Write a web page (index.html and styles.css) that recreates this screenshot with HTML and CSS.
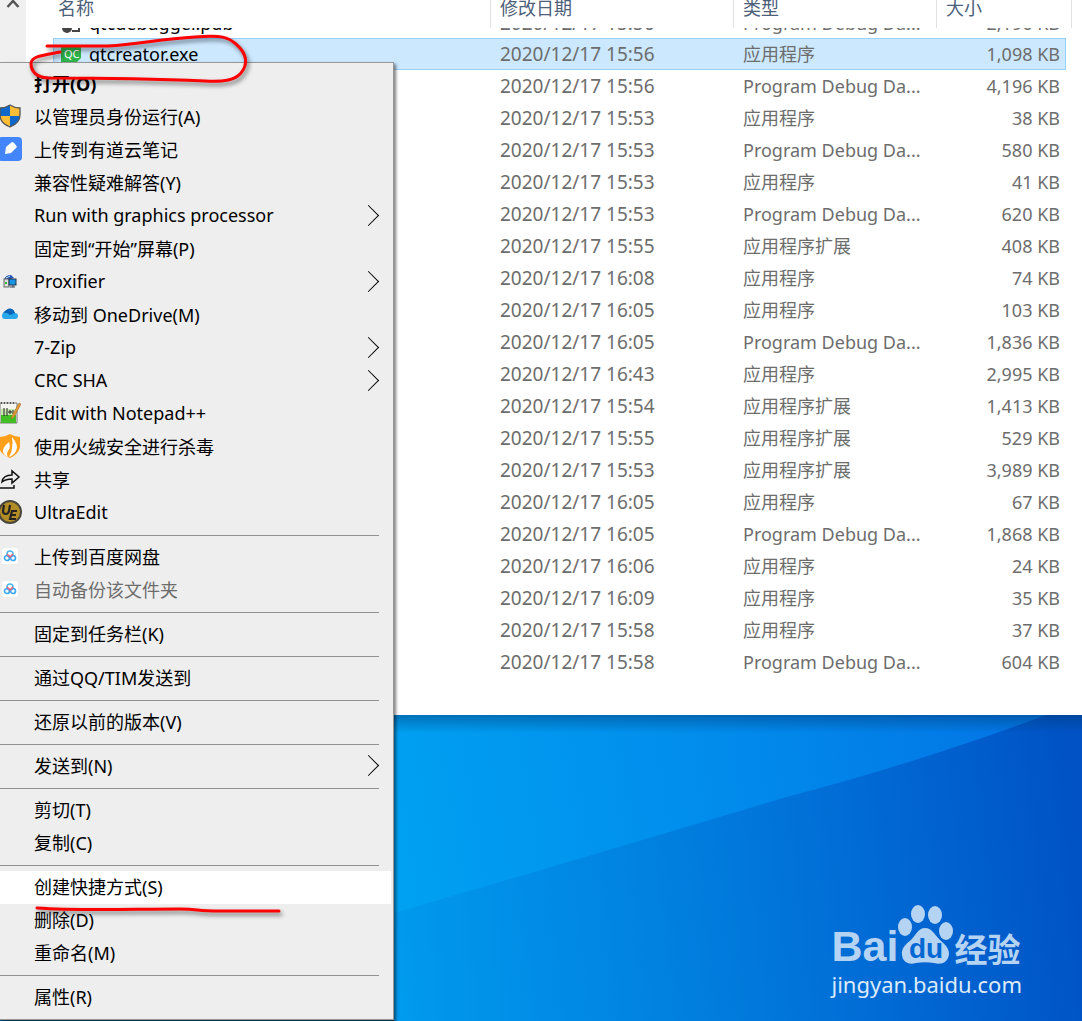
FILE: index.html
```
<!DOCTYPE html>
<html lang="zh-CN">
<head>
    <meta charset="UTF-8">
    <meta name="viewport" content="width=device-width, initial-scale=1.0">
    <title>qtcreator.exe</title>
    <link rel="stylesheet" href="styles.css">
</head>
<body>
    <main class="explorer">
        <div class="nav-scroll">
            <svg width="14" height="9" viewBox="0 0 14 9"><path d="M1.500 7L7 1l5.500 6" fill="none" stroke="#555" stroke-width="2.500"/></svg>
        </div>
        <table class="files">
            <colgroup>
                <col>
                <col class="col-date">
                <col class="col-type">
                <col class="col-size">
                <col class="col-end">
            </colgroup>
            <thead>
                <tr><th>名称</th><th>修改日期</th><th>类型</th><th>大小</th><th></th></tr>
            </thead>
            <tbody>
                <tr class="cut">
                    <td><div class="clip name"><svg width="20" height="20" viewBox="0 0 20 20"><circle cx="6" cy="10" r="5" fill="#444"/><path d="M11 13h7V6" fill="none" stroke="#444" stroke-width="2"/></svg>qtcdebugger.pdb</div></td>
                    <td class="date"><div class="clip">2020/12/17 15:56</div></td>
                    <td><div class="clip">Program Debug Da...</div></td>
                    <td class="size"><div class="clip">2,196 KB</div></td>
                    <td></td>
                </tr>
                <tr class="selected">
                    <td><div class="name"><svg width="20" height="16" viewBox="0 0 20 16"><path d="M0 0h20v12l-4 4H0z" fill="#2eb34a"/><text x="3" y="12" class="qc">QC</text></svg>qtcreator.exe</div></td>
                    <td class="date">2020/12/17 15:56</td><td>应用程序</td><td class="size">1,098 KB</td><td></td>
                </tr>
                <tr><td></td><td class="date">2020/12/17 15:56</td><td>Program Debug Da...</td><td class="size">4,196 KB</td><td></td></tr>
                <tr><td></td><td class="date">2020/12/17 15:53</td><td>应用程序</td><td class="size">38 KB</td><td></td></tr>
                <tr><td></td><td class="date">2020/12/17 15:53</td><td>Program Debug Da...</td><td class="size">580 KB</td><td></td></tr>
                <tr><td></td><td class="date">2020/12/17 15:53</td><td>应用程序</td><td class="size">41 KB</td><td></td></tr>
                <tr><td></td><td class="date">2020/12/17 15:53</td><td>Program Debug Da...</td><td class="size">620 KB</td><td></td></tr>
                <tr><td></td><td class="date">2020/12/17 15:55</td><td>应用程序扩展</td><td class="size">408 KB</td><td></td></tr>
                <tr><td></td><td class="date">2020/12/17 16:08</td><td>应用程序</td><td class="size">74 KB</td><td></td></tr>
                <tr><td></td><td class="date">2020/12/17 16:05</td><td>应用程序</td><td class="size">103 KB</td><td></td></tr>
                <tr><td></td><td class="date">2020/12/17 16:05</td><td>Program Debug Da...</td><td class="size">1,836 KB</td><td></td></tr>
                <tr><td></td><td class="date">2020/12/17 16:43</td><td>应用程序</td><td class="size">2,995 KB</td><td></td></tr>
                <tr><td></td><td class="date">2020/12/17 15:54</td><td>应用程序扩展</td><td class="size">1,413 KB</td><td></td></tr>
                <tr><td></td><td class="date">2020/12/17 15:55</td><td>应用程序扩展</td><td class="size">529 KB</td><td></td></tr>
                <tr><td></td><td class="date">2020/12/17 15:53</td><td>应用程序扩展</td><td class="size">3,989 KB</td><td></td></tr>
                <tr><td></td><td class="date">2020/12/17 16:05</td><td>应用程序</td><td class="size">67 KB</td><td></td></tr>
                <tr><td></td><td class="date">2020/12/17 16:05</td><td>Program Debug Da...</td><td class="size">1,868 KB</td><td></td></tr>
                <tr><td></td><td class="date">2020/12/17 16:06</td><td>应用程序</td><td class="size">24 KB</td><td></td></tr>
                <tr><td></td><td class="date">2020/12/17 16:09</td><td>应用程序</td><td class="size">35 KB</td><td></td></tr>
                <tr><td></td><td class="date">2020/12/17 15:58</td><td>应用程序</td><td class="size">37 KB</td><td></td></tr>
                <tr><td></td><td class="date">2020/12/17 15:58</td><td>Program Debug Da...</td><td class="size">604 KB</td><td></td></tr>
            </tbody>
        </table>
    </main>

    <section class="desktop">
        <svg class="wallpaper" viewBox="394 715 688 306" preserveAspectRatio="none">
            <defs>
                <linearGradient id="beam" gradientUnits="userSpaceOnUse" x1="394" y1="800" x2="1000" y2="700">
                    <stop offset="0" stop-color="#00a0f2"/>
                    <stop offset="0.500" stop-color="#018dec"/>
                    <stop offset="1" stop-color="#0277e6"/>
                </linearGradient>
                <linearGradient id="dark" gradientUnits="userSpaceOnUse" x1="394" y1="940" x2="1082" y2="860">
                    <stop offset="0" stop-color="#009aee"/>
                    <stop offset="0.500" stop-color="#0179dc"/>
                    <stop offset="0.750" stop-color="#0166d2"/>
                    <stop offset="1" stop-color="#0052c5"/>
                </linearGradient>
                <linearGradient id="edge" x1="0" y1="0" x2="0" y2="1">
                    <stop offset="0" stop-color="#003a70" stop-opacity="0.450"/>
                    <stop offset="1" stop-color="#003a70" stop-opacity="0"/>
                </linearGradient>
            </defs>
            <rect x="394" y="715" width="688" height="306" fill="url(#dark)"/>
            <path d="M394 715H1046L1038 718Q920 762 783 798Q600 853 394 913z" fill="url(#beam)"/>
            <rect x="394" y="715" width="688" height="18" fill="url(#edge)"/>
        </svg>
        <div class="watermark">
            <div class="brand">
                <span class="bai">Bai</span>
                <svg width="56" height="62" viewBox="0 0 56 62">
                    <g fill="#b5d3f2">
                        <ellipse cx="7" cy="23" rx="7" ry="9"/>
                        <ellipse cx="20" cy="10" rx="7" ry="9"/>
                        <ellipse cx="37" cy="11" rx="7" ry="9"/>
                        <ellipse cx="48" cy="27" rx="7" ry="9"/>
                        <path d="M27 24C20 24 18 31 13 36C8 40 3 44 4 51C5 59 12 61 18 59C24 58 30 58 36 59C43 61 50 59 51 50C51 43 46 40 41 35C36 30 34 24 27 24z"/>
                    </g>
                    <text x="11" y="54" class="du">du</text>
                </svg>
                <span class="jingyan">经验</span>
            </div>
            <div class="url">jingyan.baidu.com</div>
        </div>
    </section>

    <nav class="menu">
        <button class="item default" type="button"><span class="icon"></span>打开(O)</button>
        <button class="item" type="button"><span class="icon"><svg width="22" height="24" viewBox="0 0 22 24">
            <path d="M11 1C8 3 4 4 1 4v8h10z" fill="#0f68c9"/><path d="M11 1c3 2 7 3 10 3v8H11z" fill="#ffbc35"/>
            <path d="M1 12c1 6 5 9 10 11V12z" fill="#ffbc35"/><path d="M21 12c-1 6-5 9-10 11V12z" fill="#0f68c9"/>
            <path d="M11 1C8 3 4 4 1 4v7c0 6 5 10 10 12c5-2 10-6 10-12V4c-3 0-7-1-10-3z" fill="none" stroke="#555" stroke-width="1.300"/></svg></span>以管理员身份运行(A)</button>
        <button class="item" type="button"><span class="icon"><svg width="24" height="24" viewBox="0 0 24 24">
            <rect width="24" height="24" rx="4" fill="#4385fb"/><path d="M7 17l1-7 6-5q2 0 5 5l-6 6z" fill="#fff"/></svg></span>上传到有道云笔记</button>
        <button class="item" type="button"><span class="icon"></span>兼容性疑难解答(Y)</button>
        <button class="item sub" type="button"><span class="icon"></span>Run with graphics processor</button>
        <button class="item" type="button"><span class="icon"></span>固定到“开始”屏幕(P)</button>
        <button class="item sub" type="button"><span class="icon"><svg width="14" height="14" viewBox="0 0 14 14">
            <path d="M1 6q1-5 7-5l3 3-7 2z" fill="#2556b8"/><path d="M3 4l4-2" stroke="#cde" stroke-width="1"/><rect x="1" y="5" width="5" height="8" fill="#ddd" stroke="#666"/><rect x="2" y="8" width="2" height="2" fill="#3b3"/>
            <rect x="6" y="5" width="7" height="6" fill="#1694e8" stroke="#234"/><path d="M7 13h5M10 11v2" stroke="#345"/></svg></span>Proxifier</button>
        <button class="item" type="button"><span class="icon"><svg width="16" height="12" viewBox="0 0 16 12">
            <path d="M0 8Q0 4 4 4Q6 0 10 1Q12 2 13 5Q16 5 16 8Q16 11 13 11H3Q0 11 0 8z" fill="#28a8ea"/><path d="M1 5Q6-1 10 1Q12 2 13 5L8 7Q5 4 1 5z" fill="#0864b8"/></svg></span>移动到 OneDrive(M)</button>
        <button class="item sub" type="button"><span class="icon"></span>7-Zip</button>
        <button class="item sub" type="button"><span class="icon"></span>CRC SHA</button>
        <button class="item" type="button"><span class="icon"><svg width="22" height="24" viewBox="0 0 22 24">
            <path d="M1 2h17v20H1z" fill="#f5f5f0" stroke="#777"/><path d="M2 13h15v9H2z" fill="#43bd24"/><path d="M2 8h15v6H2z" fill="#c9e8b0"/>
            <path d="M5 7v8M8 7v8M9 11h4M11 9v4M14 9v4" stroke="#222" fill="none"/><path d="M20 2l-7 13-1 3 3-2 7-13z" fill="#e59a32" stroke="#9b6420" stroke-width="0.500"/><path d="M2 2h15" stroke="#555" stroke-dasharray="1 2" stroke-width="2"/></svg></span>Edit with Notepad++</button>
        <button class="item" type="button"><span class="icon"><svg width="22" height="24" viewBox="0 0 22 24">
            <path d="M11 0Q16 3 21 3V13Q20 20 11 24Q1 20 0 13V3Q6 3 11 0z" fill="#ff9f1a"/>
            <path d="M13 3Q20 11 17 17Q15 21 10 23Q13 18 13 14Q14 9 13 3z" fill="#fff"/><path d="M10 8Q12 14 9 17Q7 20 9 23Q3 20 4 16Q5 12 10 8z" fill="#fff"/></svg></span>使用火绒安全进行杀毒</button>
        <button class="item" type="button"><span class="icon"><svg width="22" height="22" viewBox="0 0 22 22">
            <path d="M3 14Q4 7 13 7V3l7 6-7 6v-4Q7 11 3 14z" fill="none" stroke="#111" stroke-width="1.500"/><path d="M0 20h15v-3" fill="none" stroke="#111" stroke-width="1.500"/></svg></span>共享</button>
        <button class="item" type="button"><span class="icon"><svg width="24" height="24" viewBox="0 0 24 24">
            <circle cx="12" cy="12" r="11" fill="#b28d25" stroke="#49463c" stroke-width="2"/><path d="M6 5L5 11Q5 14 8 14Q10 14 11 11L12 5M19 11h-5l-2 8h6M13 15h5" fill="none" stroke="#222" stroke-width="2.200"/></svg></span>UltraEdit</button>
        <hr>
        <button class="item" type="button"><span class="icon"><svg width="16" height="16" viewBox="0 0 16 16">
            <rect width="16" height="16" rx="3" fill="#fff"/><circle cx="8" cy="6" r="3" fill="none" stroke="#49b8fa" stroke-width="1.500"/><circle cx="5" cy="10" r="2.500" fill="none" stroke="#3ca8f5" stroke-width="1.700"/><circle cx="11" cy="10" r="2.500" fill="none" stroke="#3ca8f5" stroke-width="1.700"/><path d="M5 6l3 3 3-3" fill="none" stroke="#f25b75" stroke-width="1.500"/></svg></span>上传到百度网盘</button>
        <button class="item" type="button" disabled><span class="icon"><svg width="16" height="16" viewBox="0 0 16 16">
            <rect width="16" height="16" rx="3" fill="#fff"/><circle cx="8" cy="6" r="3" fill="none" stroke="#49b8fa" stroke-width="1.500"/><circle cx="5" cy="10" r="2.500" fill="none" stroke="#3ca8f5" stroke-width="1.700"/><circle cx="11" cy="10" r="2.500" fill="none" stroke="#3ca8f5" stroke-width="1.700"/><path d="M5 6l3 3 3-3" fill="none" stroke="#f25b75" stroke-width="1.500"/></svg></span>自动备份该文件夹</button>
        <hr>
        <button class="item" type="button"><span class="icon"></span>固定到任务栏(K)</button>
        <hr>
        <button class="item" type="button"><span class="icon"></span>通过QQ/TIM发送到</button>
        <hr>
        <button class="item" type="button"><span class="icon"></span>还原以前的版本(V)</button>
        <hr>
        <button class="item sub" type="button"><span class="icon"></span>发送到(N)</button>
        <hr>
        <button class="item" type="button"><span class="icon"></span>剪切(T)</button>
        <button class="item" type="button"><span class="icon"></span>复制(C)</button>
        <hr>
        <button class="item active" type="button"><span class="icon"></span>创建快捷方式(S)</button>
        <button class="item" type="button"><span class="icon"></span>删除(D)</button>
        <button class="item" type="button"><span class="icon"></span>重命名(M)</button>
        <hr>
        <button class="item" type="button"><span class="icon"></span>属性(R)</button>
    </nav>

    <!-- hand-drawn marks -->
    <svg class="marks" width="300" height="930" viewBox="0 0 300 930">
        <path d="M47 46H108C140 44 160 39 195 37C222 35 228 37 236 44C246 53 249 63 241 73C235 80 225 82 205 81C160 79 120 78 48 78C36 77 31 71 31 63C32 56 44 55 60 52"/>
        <path d="M37 908C80 911 130 909 180 909C200 909 195 911 220 911H279"/>
    </svg>
</body>
</html>
```

FILE: styles.css
```
* {
    box-sizing: border-box;
}
body {
    margin: 0;
    min-height: 100vh;
    display: flex;
    flex-direction: column;
    position: relative;
    overflow-x: hidden;
    font-family: "Noto Sans", "Noto Sans CJK SC", sans-serif;
    font-size: 18px;
    color: #000;
}

/* file list */
.explorer {
    display: flex;
    background: #fff;
    padding-right: 10px;
}
.nav-scroll {
    flex: none;
    width: 26px;
    margin-right: 27px;
    padding-left: 6px;
    background: #f0f0f0;
    line-height: 0;
}
.files {
    flex: 1;
    table-layout: fixed;
    border-collapse: separate;
    border-spacing: 0;
    margin-bottom: 37px;
    color: #6d6d6d;
}
.col-date {
    width: 243px;
}
.col-type {
    width: 203px;
}
.col-size {
    width: 130px;
}
.col-end {
    width: 6px;
}
.files th {
    height: 28px;
    padding: 0 0 12px 9px;
    border-left: 1px solid #e2e2e2;
    font-weight: 400;
    line-height: 16px;
    text-align: left;
    color: #4c607a;
}
.files th:first-child {
    border-left: none;
    padding-left: 5px;
}
.files th:last-child {
    border-left: none;
    border-right: 1px solid #e2e2e2;
    padding: 0;
}
.files td {
    height: 32px;
    padding: 0 0 0 10px;
    line-height: 30px;
    white-space: nowrap;
}
.files td:first-child {
    padding-left: 8px;
    color: #000;
}
.files td:last-child {
    padding: 0;
}
.files .date {
    font-size: 19px;
}
.files .size {
    padding: 0 6px 0 0;
    text-align: right;
}
.files .cut td {
    height: 10px;
}
.clip {
    height: 10px;
    overflow: hidden;
    display: flex;
    align-items: flex-end;
}
.size .clip {
    justify-content: flex-end;
}
.name {
    display: flex;
    align-items: center;
    gap: 8px;
}
.name.clip {
    align-items: flex-end;
}
.qc {
    font: 11px "Noto Sans", sans-serif;
    fill: #fff;
}
.selected td {
    background: #cce8ff;
    border-top: 1px solid #99d1ff;
    border-bottom: 1px solid #99d1ff;
}
.selected td:first-child {
    border-left: 1px solid #99d1ff;
    padding-left: 7px;
}
.selected .size {
    border-right: 1px solid #99d1ff;
    padding-right: 5px;
}
.selected td:last-child {
    background: none;
    border: none;
}

/* desktop */
.desktop {
    flex: 1;
    position: relative;
    display: flex;
    justify-content: flex-end;
    align-items: flex-end;
    padding: 0 60px 22px 394px;
    background: #005a80;
}
.wallpaper {
    position: absolute;
    top: 0;
    left: 394px;
    width: calc(100% - 394px);
    height: 100%;
}
.watermark {
    position: relative;
    color: #b5d3f2;
}
.brand {
    display: flex;
    align-items: flex-end;
    height: 64px;
    padding-bottom: 3px;
    font-weight: bold;
}
.brand svg {
    flex: none;
}
.bai {
    font-family: "Liberation Sans", sans-serif;
    font-size: 43px;
    line-height: 40px;
}
.du {
    font: bold 28px "Liberation Sans", sans-serif;
    fill: #0168d3;
}
.jingyan {
    font-family: "Noto Sans CJK SC", sans-serif;
    font-size: 33px;
    line-height: 36px;
}
.url {
    font-size: 22px;
    line-height: 30px;
    color: #dceafa;
}

/* context menu */
.menu {
    position: absolute;
    top: 62px;
    left: 0;
    width: 394px;
    padding: 5px 2px 5px 0;
    background: #eee;
    border: 1px solid #979797;
    border-left: none;
    box-shadow: 2px 2px 3px rgba(0, 0, 0, 0.5);
}
.item {
    display: flex;
    align-items: center;
    width: 100%;
    height: 33px;
    padding: 0 0 3px;
    border: none;
    background: none;
    font: inherit;
    color: #000;
    text-align: left;
    white-space: nowrap;
}
.item:hover,
.item.active {
    background: #fff;
}
.item:disabled {
    color: #6d6d6d;
}
.default {
    font-weight: bold;
}
.icon {
    flex: none;
    width: 20px;
    margin-right: 14px;
    display: flex;
    justify-content: center;
}
.icon svg {
    flex: none;
}
.sub::after {
    content: "";
    width: 14px;
    height: 14px;
    margin-left: auto;
    margin-right: 15px;
    border-top: 1px solid #000;
    border-right: 1px solid #000;
    transform: rotate(45deg);
}
.menu hr {
    height: 1px;
    margin: 5px 12px 5px 0;
    border: none;
    background: #919191;
}

.marks {
    position: absolute;
    top: 0;
    left: 0;
    pointer-events: none;
    fill: none;
    stroke: #f00;
    stroke-width: 3;
    stroke-linecap: round;
    filter: drop-shadow(2px 3px 2px rgba(0, 0, 0, 0.5));
}
```
